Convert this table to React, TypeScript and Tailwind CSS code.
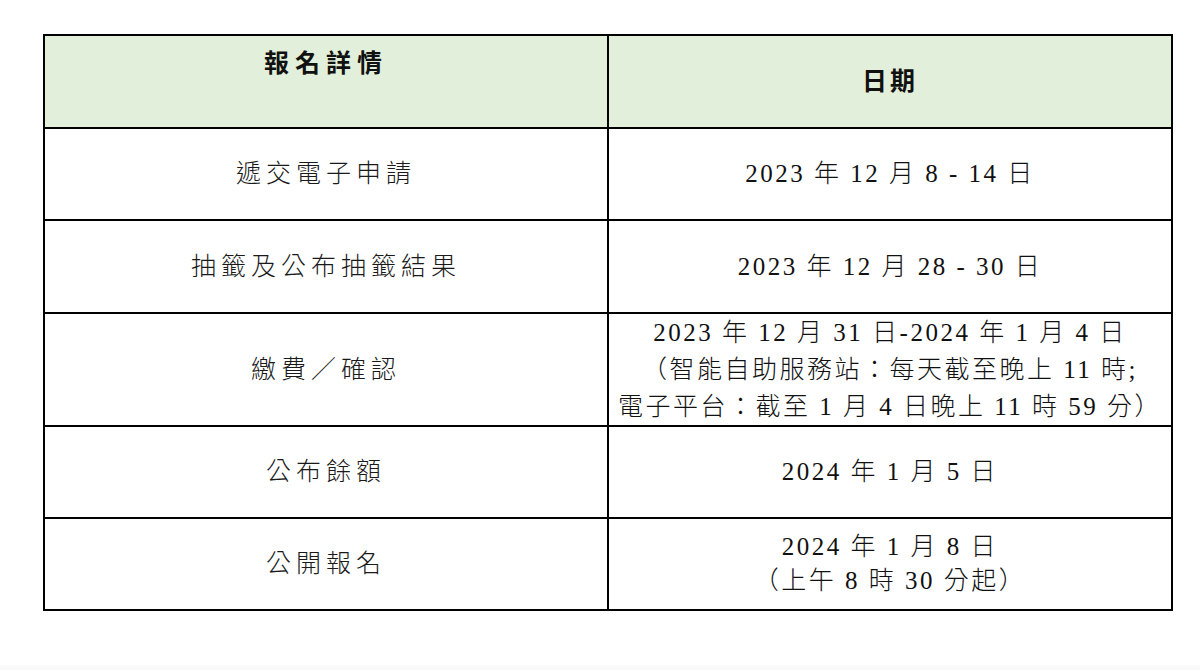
const FONT = '"Liberation Serif", "Noto Sans CJK TC", serif'

type Row = { label: string; lines: string[]; h: string; lh: string }

const rows: Row[] = [
  { label: '遞交電子申請', lines: ['2023 年 12 月 8 - 14 日'], h: 'h-[92px]', lh: 'leading-[36px]' },
  { label: '抽籤及公布抽籤結果', lines: ['2023 年 12 月 28 - 30 日'], h: 'h-[93px]', lh: 'leading-[36px]' },
  {
    label: '繳費／確認',
    lines: [
      '2023 年 12 月 31 日-2024 年 1 月 4 日',
      '（智能自助服務站：每天截至晚上 11 時;',
      '電子平台：截至 1 月 4 日晚上 11 時 59 分）',
    ],
    h: 'h-[113px]',
    lh: 'leading-[37px]',
  },
  { label: '公布餘額', lines: ['2024 年 1 月 5 日'], h: 'h-[92px]', lh: 'leading-[36px]' },
  { label: '公開報名', lines: ['2024 年 1 月 8 日', '（上午 8 時 30 分起）'], h: 'h-[92px]', lh: 'leading-[34px]' },
]

export default function App() {
  return (
    <div className="flex h-[670px] w-[1200px] flex-col bg-white" style={{ fontFamily: FONT }}>
      <div className="flex-1 pt-[34px] pl-[43px]">
        <table className="w-[1128px] table-fixed border-collapse text-[#111]">
          <colgroup>
            <col className="w-[564px]" />
            <col className="w-[564px]" />
          </colgroup>
          <thead>
            <tr className="h-[93px] bg-[#e2efda]">
              <th className="border-2 border-black pt-[12px] align-top text-[25px] font-bold leading-[32px] tracking-[6px]">
                報名詳情
              </th>
              <th className="border-2 border-black align-middle text-[25px] font-bold leading-[32px] tracking-[3px]">
                日期
              </th>
            </tr>
          </thead>
          <tbody>
            {rows.map((r) => (
              <tr key={r.label} className={r.h}>
                <td className="border-2 border-black text-center align-middle text-[25px] font-light leading-[32px] tracking-[5px] text-[#1a1a1a]">
                  {r.label}
                </td>
                <td
                  className={`border-2 border-black p-0 text-center align-middle text-[25px] font-light tracking-[2.5px] whitespace-nowrap ${r.lh}`}
                >
                  {r.lines.map((l) => (
                    <div key={l}>{l}</div>
                  ))}
                </td>
              </tr>
            ))}
          </tbody>
        </table>
      </div>
      <div className="h-[5px] bg-[#f9f9f9]" />
    </div>
  )
}
